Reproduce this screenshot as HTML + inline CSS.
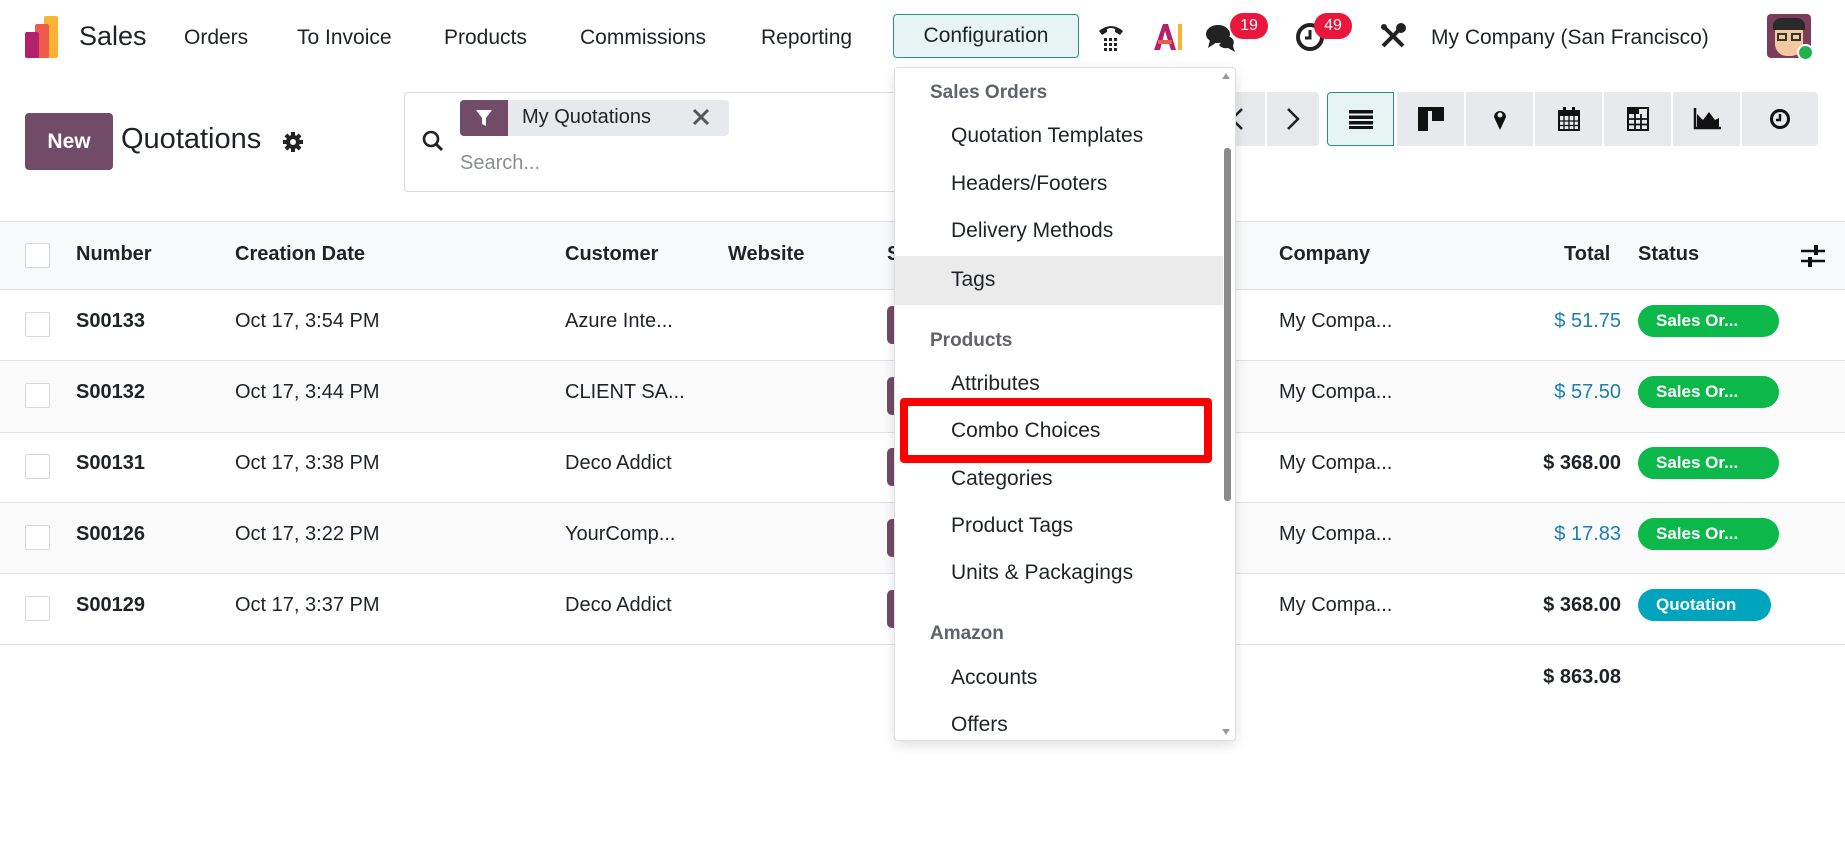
<!DOCTYPE html>
<html><head><meta charset="utf-8">
<style>
*{box-sizing:border-box;margin:0;padding:0}
body{width:1845px;height:854px;overflow:hidden;background:#fff;font-family:"Liberation Sans",sans-serif;color:#1f2328;position:relative}
.a{position:absolute;white-space:nowrap}
.nav{font-size:21px;top:26px}
.hd{font-weight:bold;font-size:20px;top:243px}
.cell{font-size:20px}
.b{font-weight:bold}
.chk{position:absolute;left:25px;width:25px;height:25px;border:1px solid #d5d8dc;background:#fff;border-radius:2px}
.line{position:absolute;left:0;width:1845px;height:1px;background:#dee2e6}
.badge{position:absolute;height:32px;border-radius:16px;color:#fff;font-weight:bold;font-size:17px;line-height:32px;padding-left:18px}
.vb{position:absolute;top:92px;height:54px;width:67px;background:#e7e9ed;display:flex;align-items:center;justify-content:center}
.mi{position:absolute;left:951px;font-size:21px;color:#1f2328}
.ms{position:absolute;left:930px;font-size:19px;font-weight:bold;color:#5f636a}
.sp{position:absolute;left:887px;width:10px;height:38px;background:#714b67;border-radius:5px 0 0 5px}
</style></head><body>

<!-- navbar -->
<svg class="a" style="left:24px;top:16px" width="38" height="42" viewBox="0 0 38 42">
<rect x="20" y="0" width="14" height="42" rx="2" fill="#f9b234"/>
<rect x="11" y="8" width="14" height="34" rx="2" fill="#f05a4a"/>
<rect x="1" y="16" width="14" height="26" rx="2" fill="#b3206e"/>
</svg>
<div class="a" style="left:79px;top:21px;font-size:27px">Sales</div>
<div class="a nav" style="left:184px">Orders</div>
<div class="a nav" style="left:297px">To Invoice</div>
<div class="a nav" style="left:444px">Products</div>
<div class="a nav" style="left:580px">Commissions</div>
<div class="a nav" style="left:761px">Reporting</div>
<div class="a" style="left:893px;top:14px;width:186px;height:44px;border:1px solid #2a8d8d;background:#e6f4f4;border-radius:4px;font-size:21px;line-height:42px;text-align:center">Configuration</div>
<!-- phone -->
<svg class="a" style="left:1096px;top:21px" width="30" height="32" viewBox="0 0 30 32"><path d="M3 10 Q15 0 27 10 L24 14 L19 11 L19 8 Q15 6 11 8 L11 11 L6 14Z" fill="#222"/><g fill="#222"><rect x="8" y="17" width="3" height="3"/><rect x="13" y="17" width="3" height="3"/><rect x="18" y="17" width="3" height="3"/><rect x="8" y="22" width="3" height="3"/><rect x="13" y="22" width="3" height="3"/><rect x="18" y="22" width="3" height="3"/><rect x="8" y="27" width="3" height="3"/><rect x="13" y="27" width="3" height="3"/><rect x="18" y="27" width="3" height="3"/></g></svg>
<!-- AI -->
<svg class="a" style="left:1152px;top:22px" width="32" height="30" viewBox="0 0 32 30"><path d="M2 28 L11 2 L16 2 L24 28 L19 28 L13 9 L8 28Z" fill="#b3206e"/><path d="M6 20 L20 20" stroke="#f05a4a" stroke-width="4"/><rect x="26" y="2" width="4" height="26" fill="#f9b234"/></svg>
<!-- chat -->
<svg class="a" style="left:1205px;top:22px" width="32" height="32" viewBox="0 0 32 32"><ellipse cx="13" cy="12" rx="12" ry="9" fill="#222"/><path d="M5 18 L3 26 L12 20Z" fill="#222"/><path d="M22 14 Q31 16 28 24 L30 30 L23 26 Q17 27 14 23" fill="#222"/></svg>
<div class="a" style="left:1230px;top:13px;width:38px;height:26px;border-radius:13px;background:#e8173b;color:#fff;font-size:16px;line-height:26px;text-align:center">19</div>
<svg class="a" style="left:1295px;top:22px" width="30" height="30" viewBox="0 0 30 30"><circle cx="15" cy="15" r="12" fill="none" stroke="#222" stroke-width="4"/><path d="M15 8 V16 H10" stroke="#222" stroke-width="3" fill="none"/></svg>
<div class="a" style="left:1314px;top:13px;width:38px;height:26px;border-radius:13px;background:#e8173b;color:#fff;font-size:16px;line-height:26px;text-align:center">49</div>
<!-- tools -->
<svg class="a" style="left:1379px;top:22px" width="28" height="28" viewBox="0 0 28 28"><path d="M4 4 L24 24" stroke="#222" stroke-width="4"/><path d="M24 4 L4 24" stroke="#222" stroke-width="4"/><circle cx="22" cy="6" r="5" fill="#222"/><circle cx="5" cy="5" r="3" fill="#222"/></svg>
<div class="a nav" style="left:1431px">My Company (San Francisco)</div>
<div class="a" style="left:1767px;top:14px;width:44px;height:44px;border-radius:4px;background:#7a3e5a;overflow:hidden">
<div style="position:absolute;left:8px;top:8px;width:28px;height:34px;background:#f3c9a0;border-radius:10px 10px 12px 12px"></div>
<div style="position:absolute;left:6px;top:4px;width:32px;height:12px;background:#2a2a2a;border-radius:8px 8px 0 0"></div>
<div style="position:absolute;left:10px;top:19px;width:10px;height:8px;border:2px solid #333"></div>
<div style="position:absolute;left:24px;top:19px;width:10px;height:8px;border:2px solid #333"></div>
</div>
<div class="a" style="left:1797px;top:44px;width:17px;height:17px;border-radius:50%;background:#22b14c;border:2px solid #fff"></div>

<!-- control panel -->
<div class="a" style="left:25px;top:113px;width:88px;height:57px;background:#714b67;border-radius:4px;color:#fff;font-size:21px;font-weight:bold;line-height:57px;text-align:center">New</div>
<div class="a" style="left:121px;top:123px;font-size:29px">Quotations</div>
<svg class="a" style="left:282px;top:131px" width="22" height="22" viewBox="0 0 22 22"><g fill="#222"><circle cx="11" cy="11" r="7"/><rect x="9" y="1" width="4" height="20"/><rect x="1" y="9" width="20" height="4"/><rect x="9" y="1" width="4" height="20" transform="rotate(45 11 11)"/><rect x="9" y="1" width="4" height="20" transform="rotate(-45 11 11)"/></g><circle cx="11" cy="11" r="3" fill="#fff"/></svg>
<div class="a" style="left:404px;top:92px;width:830px;height:100px;border:1px solid #d8dadd;border-radius:4px"></div>
<svg class="a" style="left:421px;top:129px" width="24" height="24" viewBox="0 0 24 24"><circle cx="10" cy="10" r="7" fill="none" stroke="#222" stroke-width="2.6"/><path d="M15 15 L21 21" stroke="#222" stroke-width="3"/></svg>
<div class="a" style="left:460px;top:100px;width:269px;height:36px;background:#e7e9ed;border-radius:4px"></div>
<div class="a" style="left:460px;top:100px;width:48px;height:36px;background:#714b67;border-radius:4px 0 0 4px"></div>
<svg class="a" style="left:475px;top:109px" width="18" height="18" viewBox="0 0 18 18"><path d="M1 1 H17 L11 9 V17 L7 15 V9Z" fill="#fff"/></svg>
<div class="a" style="left:522px;top:106px;font-size:20px">My Quotations</div>
<svg class="a" style="left:692px;top:108px" width="18" height="18" viewBox="0 0 18 18"><path d="M2 2 L16 16 M16 2 L2 16" stroke="#555" stroke-width="3"/></svg>
<div class="a" style="left:460px;top:152px;font-size:20px;color:#8a8d91">Search...</div>

<!-- pager -->
<div class="a" style="left:1200px;top:92px;width:119px;height:54px;background:#e7e9ed;border-radius:4px"></div>
<div class="a" style="left:1265px;top:92px;width:2px;height:54px;background:#fff"></div>
<svg class="a" style="left:1230px;top:107px" width="14" height="24" viewBox="0 0 14 24"><path d="M12 2 L2 12 L12 22" stroke="#222" stroke-width="2.5" fill="none"/></svg>
<svg class="a" style="left:1286px;top:107px" width="14" height="24" viewBox="0 0 14 24"><path d="M2 2 L12 12 L2 22" stroke="#222" stroke-width="2.5" fill="none"/></svg>
<div class="vb" style="left:1327px;background:#e6f4f4;border:1px solid #2a8d8d;border-radius:4px 0 0 4px"><svg width="24" height="20"><g fill="#111"><rect y="1" width="24" height="3.5"/><rect y="6.5" width="24" height="3.5"/><rect y="12" width="24" height="3.5"/><rect y="17" width="24" height="3"/></g></svg></div>
<div class="vb" style="left:1397px"><svg width="26" height="24"><rect width="26" height="4" fill="#111"/><rect y="4" width="10" height="20" fill="#111"/><rect x="14" y="4" width="12" height="10" fill="#111"/></svg></div>
<div class="vb" style="left:1466px"><svg width="14" height="22"><path d="M7 22 L1 9 A6 6 0 1 1 13 9Z" fill="#111"/><circle cx="7" cy="7" r="2.5" fill="#e7e9ed"/></svg></div>
<div class="vb" style="left:1535px"><svg width="22" height="24"><rect x="1" y="4" width="20" height="19" fill="none" stroke="#111" stroke-width="2"/><rect x="1" y="4" width="20" height="5" fill="#111"/><rect x="5" y="0" width="3" height="6" fill="#111"/><rect x="14" y="0" width="3" height="6" fill="#111"/><path d="M1 14H21M1 18.5H21M6 9V23M11 9V23M16 9V23" stroke="#111" stroke-width="1.3"/></svg></div>
<div class="vb" style="left:1604px"><svg width="22" height="24"><rect x="1" y="1" width="20" height="22" fill="none" stroke="#111" stroke-width="2"/><rect x="1" y="1" width="11" height="6" fill="#111"/><path d="M1 12H21M1 17.5H21M8 7V23M14 7V23" stroke="#111" stroke-width="1.8"/></svg></div>
<div class="vb" style="left:1673px"><svg width="28" height="22"><path d="M2 0 V20 H28" stroke="#111" stroke-width="2.5" fill="none"/><path d="M4 19 V6 L10 12 L16 4 L22 12 L26 10 V19Z" fill="#111"/></svg></div>
<div class="vb" style="left:1742px;width:76px;border-radius:0 4px 4px 0"><svg width="22" height="22"><circle cx="11" cy="11" r="8.5" fill="none" stroke="#111" stroke-width="3"/><path d="M11 6V12H7" stroke="#111" stroke-width="2.5" fill="none"/></svg></div>

<!-- table -->
<div class="a" style="left:0;top:221px;width:1845px;height:68px;background:#f8f9fb"></div>
<div class="line" style="top:221px"></div>
<div class="line" style="top:289px"></div>
<div class="a" style="left:0;top:361px;width:1845px;height:71px;background:#fafafa"></div>
<div class="a" style="left:0;top:503px;width:1845px;height:70px;background:#fafafa"></div>
<div class="line" style="top:360px"></div><div class="line" style="top:432px"></div><div class="line" style="top:502px"></div><div class="line" style="top:573px"></div><div class="line" style="top:644px"></div>
<div class="chk" style="top:243px"></div>
<div class="a hd" style="left:76px">Number</div>
<div class="a hd" style="left:235px">Creation Date</div>
<div class="a hd" style="left:565px">Customer</div>
<div class="a hd" style="left:728px">Website</div>
<div class="a hd" style="left:887px">S</div>
<div class="a hd" style="left:1279px">Company</div>
<div class="a hd" style="left:1564px">Total</div>
<div class="a hd" style="left:1638px">Status</div>
<svg class="a" style="left:1801px;top:243px" width="24" height="26" viewBox="0 0 24 26"><path d="M0 8H24M0 18H24" stroke="#111" stroke-width="2.5"/><rect x="13" y="2" width="4" height="10" fill="#111"/><rect x="7" y="14" width="4" height="10" fill="#111"/></svg>

<!-- rows -->
<div class="chk" style="top:312px"></div><div class="sp" style="top:306px"></div>
<div class="a cell b" style="left:76px;top:310px">S00133</div><div class="a cell" style="left:235px;top:310px">Oct 17, 3:54 PM</div><div class="a cell" style="left:565px;top:310px">Azure Inte...</div><div class="a cell" style="left:1279px;top:310px">My Compa...</div><div class="a cell" style="right:224px;top:310px;color:#1a7fb5">$ 51.75</div><div class="badge" style="left:1638px;top:305px;width:141px;background:#0cb84a">Sales Or...</div>

<div class="chk" style="top:383px"></div><div class="sp" style="top:377px"></div>
<div class="a cell b" style="left:76px;top:381px">S00132</div><div class="a cell" style="left:235px;top:381px">Oct 17, 3:44 PM</div><div class="a cell" style="left:565px;top:381px">CLIENT SA...</div><div class="a cell" style="left:1279px;top:381px">My Compa...</div><div class="a cell" style="right:224px;top:381px;color:#1a7fb5">$ 57.50</div><div class="badge" style="left:1638px;top:376px;width:141px;background:#0cb84a">Sales Or...</div>

<div class="chk" style="top:454px"></div><div class="sp" style="top:448px"></div>
<div class="a cell b" style="left:76px;top:452px">S00131</div><div class="a cell" style="left:235px;top:452px">Oct 17, 3:38 PM</div><div class="a cell" style="left:565px;top:452px">Deco Addict</div><div class="a cell" style="left:1279px;top:452px">My Compa...</div><div class="a cell b" style="right:224px;top:452px">$ 368.00</div><div class="badge" style="left:1638px;top:447px;width:141px;background:#0cb84a">Sales Or...</div>

<div class="chk" style="top:525px"></div><div class="sp" style="top:519px"></div>
<div class="a cell b" style="left:76px;top:523px">S00126</div><div class="a cell" style="left:235px;top:523px">Oct 17, 3:22 PM</div><div class="a cell" style="left:565px;top:523px">YourComp...</div><div class="a cell" style="left:1279px;top:523px">My Compa...</div><div class="a cell" style="right:224px;top:523px;color:#1a7fb5">$ 17.83</div><div class="badge" style="left:1638px;top:518px;width:141px;background:#0cb84a">Sales Or...</div>

<div class="chk" style="top:596px"></div><div class="sp" style="top:590px"></div>
<div class="a cell b" style="left:76px;top:594px">S00129</div><div class="a cell" style="left:235px;top:594px">Oct 17, 3:37 PM</div><div class="a cell" style="left:565px;top:594px">Deco Addict</div><div class="a cell" style="left:1279px;top:594px">My Compa...</div><div class="a cell b" style="right:224px;top:594px">$ 368.00</div><div class="badge" style="left:1638px;top:589px;width:133px;background:#00a4bd">Quotation</div>

<div class="a cell b" style="right:224px;top:666px">$ 863.08</div>

<!-- dropdown -->
<div class="a" style="left:894px;top:67px;width:342px;height:674px;background:#fff;border:1px solid #dcdfe3;border-radius:4px;box-shadow:0 4px 12px rgba(0,0,0,.12);overflow:hidden">
<div style="position:absolute;left:0;top:188px;width:328px;height:49px;background:#ebebeb"></div>
<div style="position:absolute;right:4px;top:80px;width:7px;height:353px;background:#8a8a8a;border-radius:3px"></div>
<div style="position:absolute;right:5px;top:5px;width:0;height:0;border-left:4px solid transparent;border-right:4px solid transparent;border-bottom:6px solid #999"></div>
<div style="position:absolute;right:5px;bottom:5px;width:0;height:0;border-left:4px solid transparent;border-right:4px solid transparent;border-top:6px solid #999"></div>
</div>
<div class="ms" style="top:82px">Sales Orders</div>
<div class="mi" style="top:124px">Quotation Templates</div>
<div class="mi" style="top:172px">Headers/Footers</div>
<div class="mi" style="top:219px">Delivery Methods</div>
<div class="mi" style="top:268px">Tags</div>
<div class="ms" style="top:330px">Products</div>
<div class="mi" style="top:372px">Attributes</div>
<div class="mi" style="top:419px">Combo Choices</div>
<div class="mi" style="top:467px">Categories</div>
<div class="mi" style="top:514px">Product Tags</div>
<div class="mi" style="top:561px">Units &amp; Packagings</div>
<div class="ms" style="top:623px">Amazon</div>
<div class="mi" style="top:666px">Accounts</div>
<div class="mi" style="top:713px">Offers</div>
<div class="a" style="left:900px;top:398px;width:312px;height:65px;border:8px solid #ff0000;border-radius:4px"></div>
</body></html>
